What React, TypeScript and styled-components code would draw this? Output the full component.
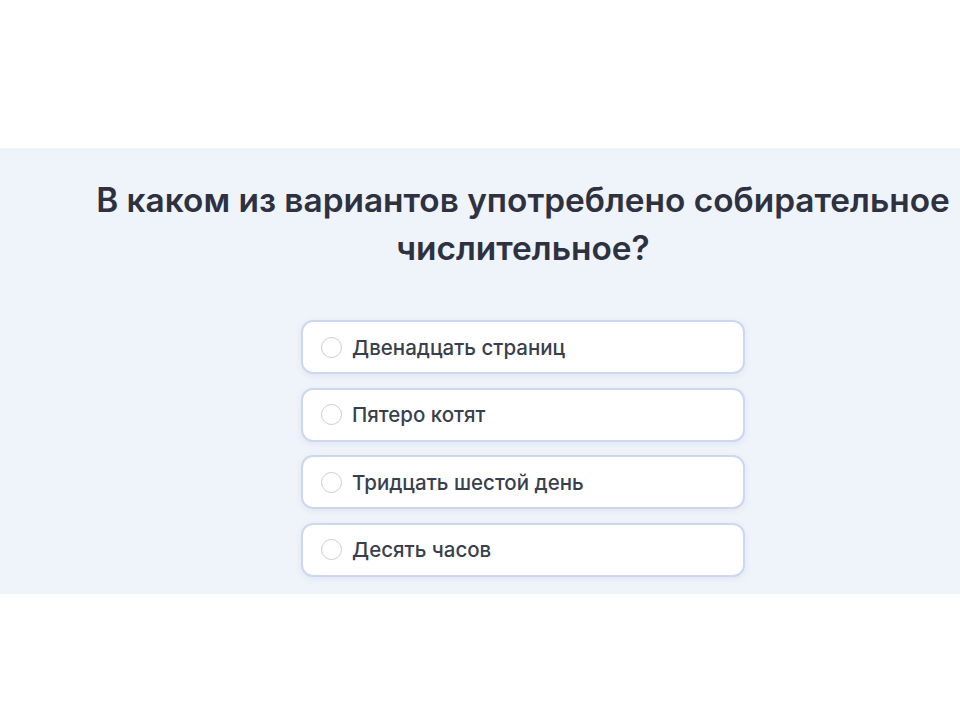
import React from "react";
import styled, { createGlobalStyle } from "styled-components";

const GlobalStyle = createGlobalStyle`
  html, body {
    margin: 0;
    padding: 0;
    background: #ffffff;
    font-family: Inter, "Noto Sans", sans-serif;
    overflow: hidden;
  }
`;

const options = [
  "Двенадцать страниц",
  "Пятеро котят",
  "Тридцать шестой день",
  "Десять часов",
];

export default function App() {
  return (
    <Page>
      <GlobalStyle />
      <Band>
        <Question>
          В каком из вариантов употреблено собирательное
          <br />
          числительное?
        </Question>
        <List>
          {options.map((o) => (
            <Option key={o}>
              <Radio />
              <Label>{o}</Label>
            </Option>
          ))}
        </List>
      </Band>
    </Page>
  );
}

const Page = styled.div`
  width: 960px;
  height: 720px;
  padding-top: 148px;
  box-sizing: border-box;
  overflow: hidden;
`;

const Band = styled.section`
  width: 1046px;
  height: 446px;
  background: #eff3fa;
  display: flex;
  flex-direction: column;
  align-items: center;
  padding-top: 28px;
  box-sizing: border-box;
`;

const Question = styled.h2`
  margin: 0;
  font-size: 33.4px;
  line-height: 48px;
  font-weight: 600;
  color: #2d3140;
  text-align: center;
  white-space: nowrap;
`;

const List = styled.div`
  margin-top: 48px;
  display: flex;
  flex-direction: column;
  gap: 13.5px;
`;

const Option = styled.div`
  width: 444px;
  height: 54px;
  box-sizing: border-box;
  background: #ffffff;
  border: 2px solid #cdd7ee;
  border-radius: 12px;
  display: flex;
  align-items: center;
  padding-left: 18px;
  gap: 10px;
  box-shadow: 0 2px 6px rgba(120, 140, 190, 0.12);
`;

const Radio = styled.span`
  width: 21px;
  height: 21px;
  border-radius: 50%;
  border: 1px solid #c9ccd3;
  box-sizing: border-box;
  background: #ffffff;
`;

const Label = styled.span`
  font-size: 20.5px;
  font-weight: 500;
  color: #3a3f4e;
`;
